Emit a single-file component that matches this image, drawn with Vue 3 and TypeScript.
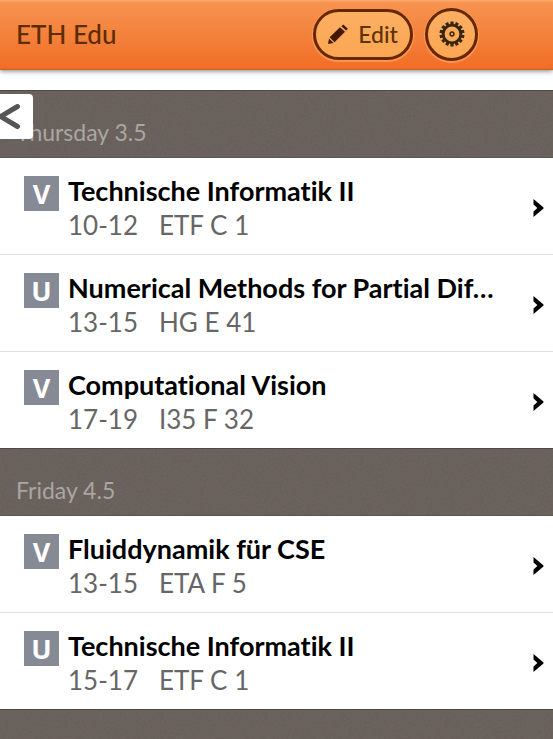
<script setup lang="ts">
interface Lecture {
  kind: 'V' | 'U'
  title: string
  time: string
  room: string
}

interface Day {
  label: string
  lectures: Lecture[]
}

const days: Day[] = [
  {
    label: 'Thursday 3.5',
    lectures: [
      { kind: 'V', title: 'Technische Informatik II', time: '10-12', room: 'ETF C 1' },
      { kind: 'U', title: 'Numerical Methods for Partial Dif…', time: '13-15', room: 'HG E 41' },
      { kind: 'V', title: 'Computational Vision', time: '17-19', room: 'I35 F 32' },
    ],
  },
  {
    label: 'Friday 4.5',
    lectures: [
      { kind: 'V', title: 'Fluiddynamik für CSE', time: '13-15', room: 'ETA F 5' },
      { kind: 'U', title: 'Technische Informatik II', time: '15-17', room: 'ETF C 1' },
    ],
  },
]

const teeth: number[] = Array.from({ length: 14 }, (_, i) => (i * 360) / 14)
</script>

<template>
  <div class="app">
    <svg class="grain" aria-hidden="true">
      <filter id="grain">
        <feTurbulence type="fractalNoise" baseFrequency="0.45" numOctaves="2" />
        <feColorMatrix values="0 0 0 0 0.1  0 0 0 0 0.08  0 0 0 0 0.06  0.5 0 0 0 -0.17" />
      </filter>
      <rect width="100%" height="100%" filter="url(#grain)" />
    </svg>

    <header class="bar">
      <h1 class="brand">ETH Edu</h1>
      <button class="pill" type="button">
        <svg class="pencil" viewBox="0 0 20 20" aria-hidden="true">
          <path d="M0 20 L1 14.5 L5.5 19 Z" />
          <path d="M1.6 13.2 L12 3.2 L17 7.8 L6.5 18.2 Z" />
          <path d="M13.4 2.2 L15.2 0.4 L19.9 4.8 L18.1 6.6 Z" />
        </svg>
        Edit
      </button>
      <button class="round" type="button" aria-label="Settings">
        <svg class="gear" viewBox="-13 -13 26 26" aria-hidden="true">
          <circle r="8.8" fill="none" stroke="currentColor" stroke-width="2.8" />
          <rect
            v-for="angle in teeth"
            :key="angle"
            x="-1.6"
            y="-12.5"
            width="3.2"
            height="3.6"
            fill="currentColor"
            :transform="`rotate(${angle})`"
          />
          <circle r="1.9" fill="none" stroke="currentColor" stroke-width="1.5" />
        </svg>
      </button>
    </header>

    <main class="schedule">
      <button class="back" type="button" aria-label="Back">
        <svg viewBox="0 0 33 45" aria-hidden="true">
          <path d="M17.5 12.5 L0.5 22.5 L17.5 32.5" fill="none" stroke="#565656" stroke-width="5" stroke-linecap="round" />
        </svg>
      </button>
      <section v-for="day in days" :key="day.label">
        <h2 class="day">{{ day.label }}</h2>
        <ul class="list">
          <li v-for="lecture in day.lectures" :key="lecture.title" class="item">
            <a class="row" href="#">
              <span class="kind">{{ lecture.kind }}</span>
              <span class="text">
                <span class="title">{{ lecture.title }}</span>
                <span class="meta">
                  <span>{{ lecture.time }}</span>
                  <span>{{ lecture.room }}</span>
                </span>
              </span>
              <svg class="chevron" viewBox="0 0 11 18" aria-hidden="true">
                <path d="M0.5 0 L10.5 8.5 V9.5 L0.5 18 V12.4 L4.4 9 L0.5 5.6 Z" />
              </svg>
            </a>
          </li>
        </ul>
      </section>
      <div class="edge"></div>
    </main>
  </div>
</template>

<style>
body {
  margin: 0;
  background: #6b635e;
}
</style>

<style scoped>
.app {
  position: relative;
  font-family: Lato, "Liberation Sans", sans-serif;
  font-variant-ligatures: none;
  min-height: 100vh;
  background: #6b635e;
}

.grain {
  position: absolute;
  top: 0;
  left: 0;
  width: 100%;
  height: 100%;
}

.bar {
  display: flex;
  align-items: center;
  box-sizing: border-box;
  height: 70px;
  padding: 0 75px 2px 16px;
  background: linear-gradient(#fbab6a 0, #f79350 3px, #f58a44 20px, #f16e27 68px, #cf5c1e 70px);
  box-shadow: 0 1px 5px rgba(0, 0, 0, 0.5);
  position: relative;
  z-index: 1;
}

.brand {
  flex: 1;
  margin: 0;
  font-size: 26px;
  line-height: 34px;
  font-weight: 500;
  color: #5c2d00;
}

.pill,
.round {
  display: flex;
  align-items: center;
  justify-content: center;
  box-sizing: border-box;
  padding: 0;
  border: 3px solid #672800;
  background: linear-gradient(#fcaf62, #fba653);
  box-shadow: 0 1px 1px 1px rgba(255, 190, 130, 0.5);
  font: inherit;
}

.pill {
  gap: 10px;
  width: 100px;
  height: 51px;
  border-radius: 26px;
  font-size: 23px;
  font-weight: 500;
  color: #5c3408;
}

.pencil {
  width: 20px;
  height: 20px;
  fill: #421900;
}

.round {
  width: 53px;
  height: 53px;
  margin-left: 12px;
  border-radius: 50%;
  color: #38260f;
}

.gear {
  width: 26px;
  height: 26px;
}

.schedule {
  position: relative;
  border-top: 20px solid #fff;
}

.back {
  position: absolute;
  top: 4px;
  left: 0;
  width: 33px;
  height: 45px;
  padding: 0;
  border: 0;
  border-radius: 0 4px 4px 0;
  background: #fff;
}

.back svg {
  display: block;
  width: 33px;
  height: 45px;
}

.day {
  box-sizing: border-box;
  height: 68px;
  margin: 0;
  padding: 26px 16px 0;
  border-top: 1px solid #4f4a44;
  border-bottom: 1px solid #5c5650;
  font-size: 23px;
  line-height: 30px;
  font-weight: 400;
  color: #aaa6a2;
}

.edge {
  border-top: 1px solid #4f4a44;
}

.list {
  margin: 0;
  padding: 0;
  list-style: none;
  background: #fff;
}

.item + .item {
  border-top: 1px solid #dedede;
}

.row {
  display: flex;
  align-items: center;
  box-sizing: border-box;
  height: 96px;
  padding: 0 9px 0 24px;
  color: #000;
  text-decoration: none;
}

.kind {
  align-self: flex-start;
  width: 35px;
  margin: 18px 9px 0 0;
  background: #868a95;
  color: #fff;
  font-family: "Open Sans", sans-serif;
  font-size: 27px;
  line-height: 35px;
  font-weight: 700;
  text-align: center;
}

.text {
  flex: 1;
  align-self: flex-start;
  min-width: 0;
  padding-top: 15px;
}

.title,
.meta {
  display: flex;
  line-height: 35px;
  white-space: nowrap;
}

.title {
  font-size: 27px;
  font-weight: 700;
}

.meta {
  gap: 21px;
  font-size: 26px;
  color: #666;
}

.chevron {
  width: 11px;
  height: 18px;
  margin-top: 4px;
}
</style>
